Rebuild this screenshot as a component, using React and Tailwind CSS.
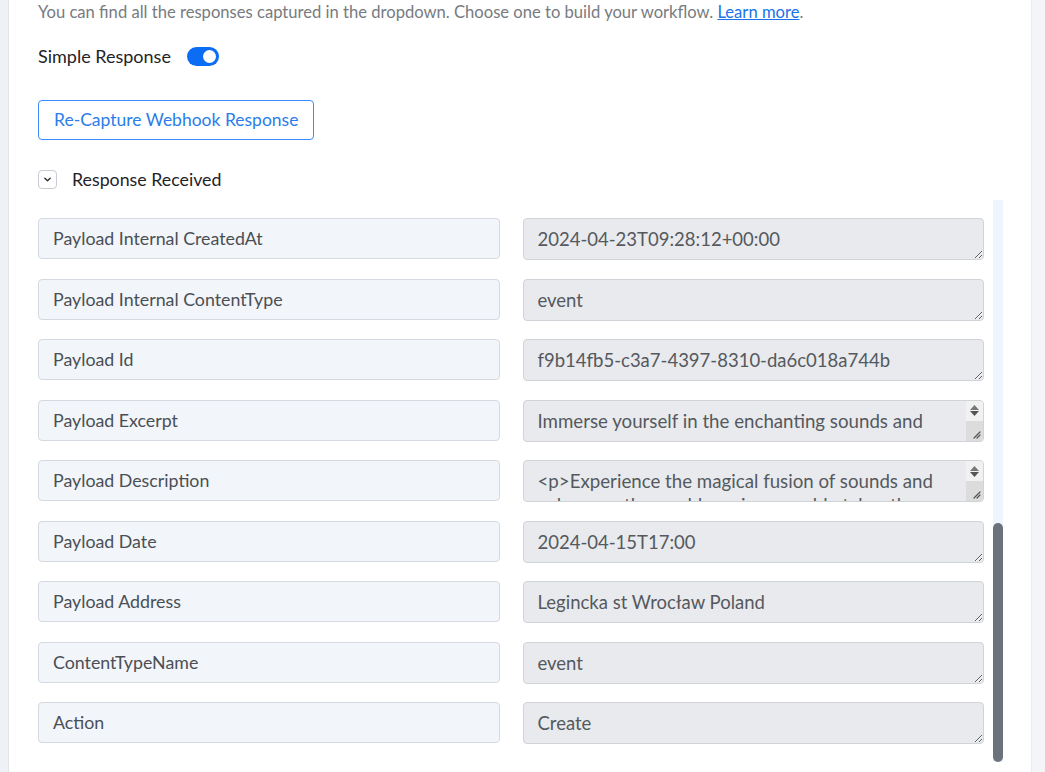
import { useState } from "react";

const rows = [
  { label: "Payload Internal CreatedAt", value: "2024-04-23T09:28:12+00:00" },
  { label: "Payload Internal ContentType", value: "event" },
  { label: "Payload Id", value: "f9b14fb5-c3a7-4397-8310-da6c018a744b" },
  { label: "Payload Excerpt", value: "Immerse yourself in the enchanting sounds and rhythms of the world, an evening of music that brings cultures together.", scroll: true, clip: true },
  { label: "Payload Description", value: "<p>Experience the magical fusion of sounds and colours as the world music ensemble takes the stage for one night only.</p>", scroll: true },
  { label: "Payload Date", value: "2024-04-15T17:00" },
  { label: "Payload Address", value: "Legincka st Wrocław Poland" },
  { label: "ContentTypeName", value: "event" },
  { label: "Action", value: "Create" },
];

function Toggle({ on, onChange }) {
  return (
    <button
      onClick={() => onChange(!on)}
      className={`relative w-[32px] h-[19px] rounded-full ${on ? "bg-[#0b6cf4]" : "bg-gray-300"}`}
    >
      <span className={`absolute top-[3px] w-[13px] h-[13px] rounded-full bg-white ${on ? "left-[16px]" : "left-[3px]"}`} />
    </button>
  );
}

function Grip() {
  return (
    <svg width="9" height="9" viewBox="0 0 9 9">
      <path d="M8 2 L2 8 M8 5 L5 8" stroke="#555" strokeWidth="1.2" strokeLinecap="round" />
    </svg>
  );
}

export default function App() {
  const [simple, setSimple] = useState(true);
  const [open, setOpen] = useState(true);

  return (
    <div className="flex w-full h-[772px] overflow-hidden bg-white" style={{ fontFamily: "Lato, 'Open Sans', sans-serif" }}>
      <div className="w-[9px] shrink-0 bg-[#eef1f5] border-r border-[#e2e6eb]" />

      <div className="flex-1 flex flex-col pl-[29px] pr-[28px] pt-[2px]">
        <p className="text-[16.6px] leading-[20px] text-[#777b80]">
          You can find all the responses captured in the dropdown. Choose one to build your workflow.{" "}
          <a href="#" className="text-[#1a73e8] underline">Learn more</a>.
        </p>

        <div className="flex items-center gap-[16px] mt-[24px] h-[20px]">
          <span className="text-[18px] text-[#1f2328]">Simple Response</span>
          <Toggle on={simple} onChange={setSimple} />
        </div>

        <div className="mt-[34px]">
          <button className="h-[40px] px-[15px] border border-[#3d8bfd] rounded-[4px] text-[17.5px] text-[#2b7de9] bg-white">
            Re-Capture Webhook Response
          </button>
        </div>

        <div className="flex items-center gap-[15px] mt-[29px] h-[20px]">
          <button
            onClick={() => setOpen(!open)}
            className="w-[19px] h-[19px] border border-[#c7ccd3] rounded-[4px] flex items-center justify-center text-[#333]"
          >
            <svg width="9" height="9" viewBox="0 0 10 10" className={open ? "" : "-rotate-90"}>
              <path d="M2 3.5 L5 6.5 L8 3.5" fill="none" stroke="currentColor" strokeWidth="1.6" strokeLinecap="round" strokeLinejoin="round" />
            </svg>
          </button>
          <span className="text-[17.8px] text-[#1f2328]">Response Received</span>
        </div>

        {open && (
          <div className="flex mt-[11px] h-[562px]">
            <div className="flex-1 grid grid-cols-2 gap-x-[23px] gap-y-[18.5px] content-start pt-[18px]">
              {rows.map(r => (
                <Row key={r.label} {...r} />
              ))}
            </div>
            <div className="w-[10px] ml-[9px] bg-[#eef5fe] flex flex-col justify-end">
              <div className="h-[239px] rounded-full bg-[#6b727b]" />
            </div>
          </div>
        )}
      </div>

      <div className="w-[14px] shrink-0 bg-[#f3f5f8] border-l border-[#e9ecf0]" />
    </div>
  );
}

function Row({ label, value, scroll, clip }) {
  return (
    <>
      <div className="h-[41px] flex items-center px-[14px] bg-[#f2f5f9] border border-[#d5dae0] rounded-[4px] text-[17.8px] text-[#4a4f55]">
        {label}
      </div>
      {scroll ? (
        <div className="h-[42px] flex bg-[#e8eaed] border border-[#d0d4d9] rounded-[4px] overflow-hidden">
          <div className={`flex-1 pl-[14px] pr-[8px] pt-[8px] text-[18.7px] leading-[24px] text-[#55595e] overflow-hidden ${clip ? "h-[32px]" : ""}`}>
            {value}
          </div>
          <div className="w-[17px] flex flex-col">
            <div className="h-[20px] bg-[#f1f1f1] flex flex-col items-center justify-center gap-[1px]">
              <svg width="9" height="5" viewBox="0 0 9 5"><path d="M0 5 L4.5 0 L9 5Z" fill="#777" /></svg>
              <svg width="9" height="5" viewBox="0 0 9 5"><path d="M0 0 L4.5 5 L9 0Z" fill="#555" /></svg>
            </div>
            <div className="flex-1 bg-[#dcdcdc] flex items-end justify-end pr-[2px] pb-[2px]">
              <Grip />
            </div>
          </div>
        </div>
      ) : (
        <textarea
          readOnly
          value={value}
          rows={1}
          className="h-[42px] px-[14px] py-[8px] leading-[24px] bg-[#e8eaed] border border-[#d0d4d9] rounded-[4px] text-[18.5px] text-[#55595e] resize-y outline-none"
        />
      )}
    </>
  );
}
